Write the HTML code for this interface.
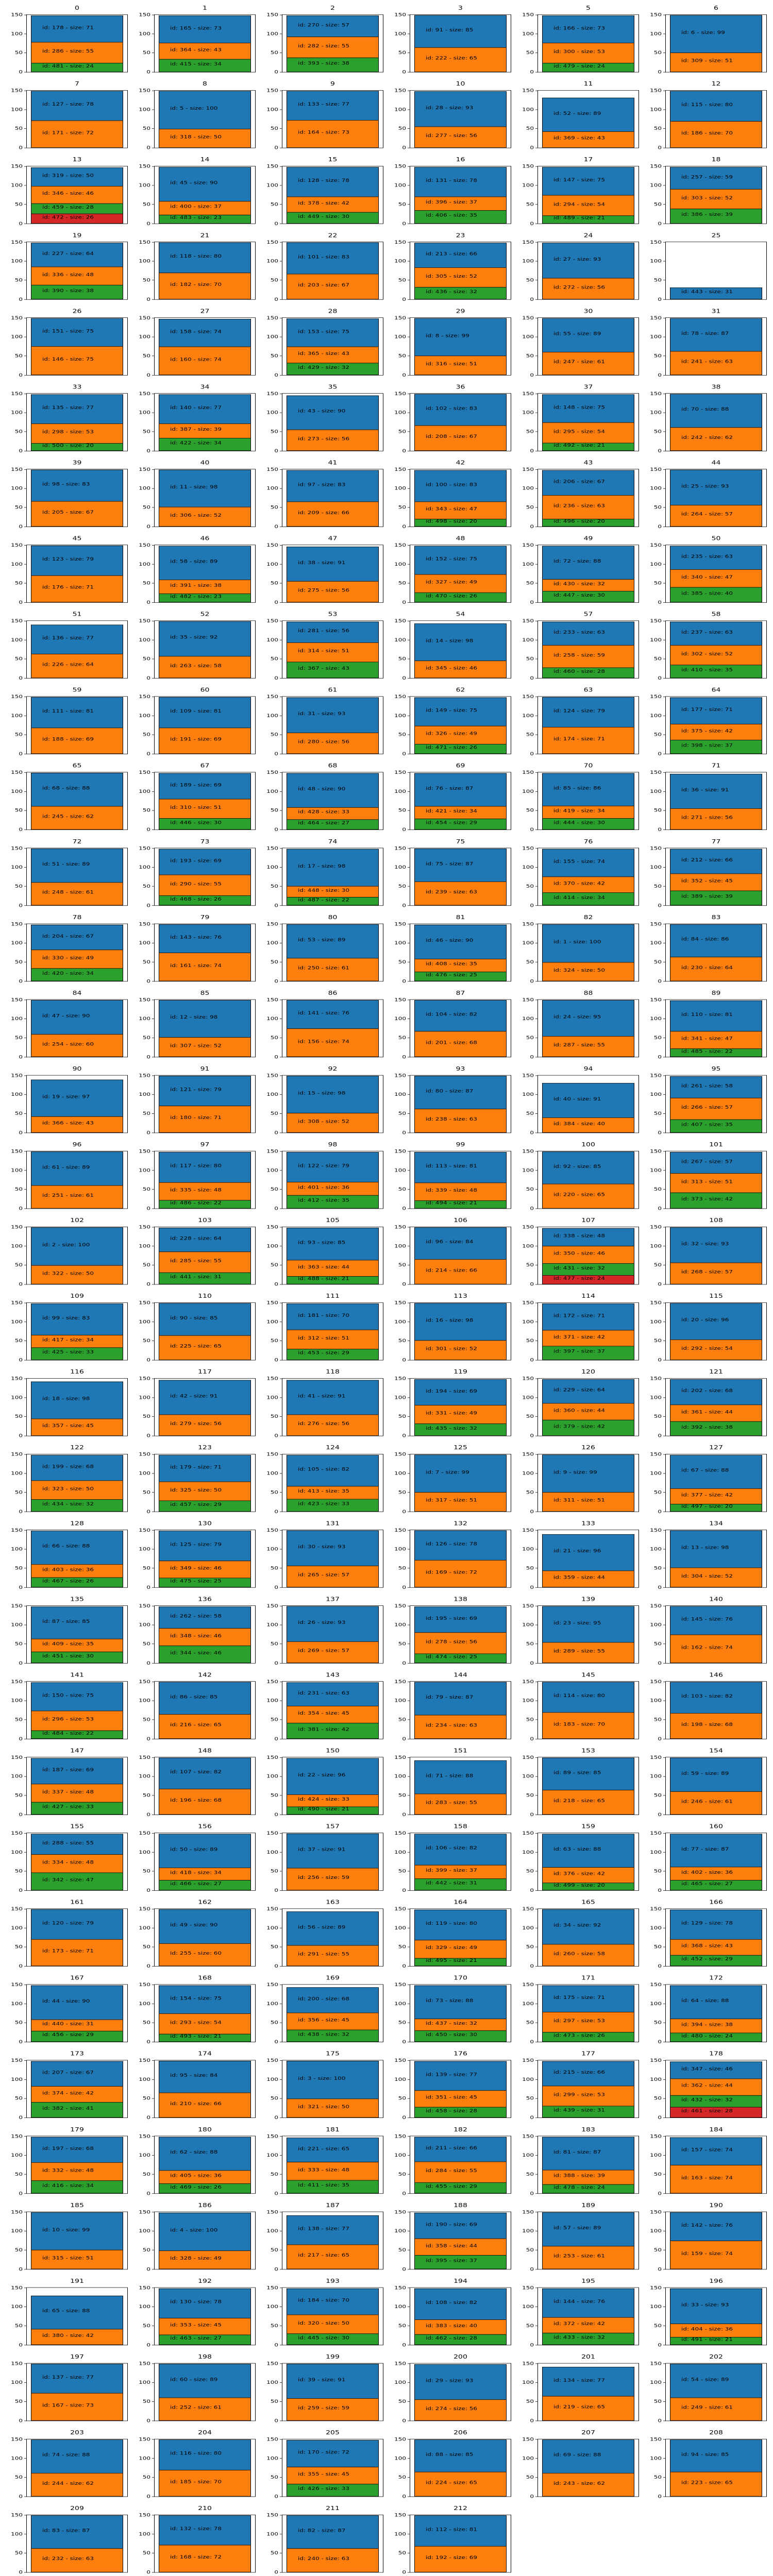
<!DOCTYPE html>
<html><head><meta charset="utf-8"><style>
html,body{margin:0;padding:0;width:100%;height:100%;overflow:hidden;background:#fff}
svg.root{display:block;width:100vw;height:100vh}
.g{display:grid;grid-template-columns:repeat(6,248px);grid-template-rows:repeat(34,200px);width:1500px;height:6800px;font-family:"DejaVu Sans","Liberation Sans",sans-serif;background:#fff}
.c{position:relative;width:248px;height:200px}
.c>b{position:absolute;left:51px;width:197px;top:14px;text-align:center;font-weight:normal;font-size:14px;line-height:16px;color:#000}
.a{position:absolute;left:51px;top:38px;width:197px;height:153px;border:1px solid #000;box-sizing:border-box}
.a i{position:absolute;right:calc(100% + 8px);font-style:normal;font-size:12px;line-height:14px;margin-top:-7px;color:#000}
.a i::after{content:"";position:absolute;left:calc(100% + 3px);top:7px;width:5px;height:1px;background:#000}
.a i:nth-child(1){top:0}.a i:nth-child(2){top:50px}.a i:nth-child(3){top:100px}.a i:nth-child(4){top:151px}
.s{position:absolute;left:8px;bottom:0;width:179px;height:151px;display:flex;flex-direction:column;justify-content:flex-end}
.s p{margin:0;position:relative;height:calc(var(--h) * 1.007px);border:1px solid #000;box-sizing:border-box;background:#1f77b4;flex:none}
.s p+p{margin-top:-1px}
.s p:nth-child(2){background:#ff7f0e}.s p:nth-child(3){background:#2ca02c}.s p:nth-child(4){background:#d62728}
.s p span{position:absolute;left:21px;top:calc(50% - 4px);transform:translateY(-50%);font-size:12px;white-space:nowrap;color:#000;line-height:14px}
</style></head><body><svg class="root" xmlns="http://www.w3.org/2000/svg" viewBox="0 0 1500 6800" preserveAspectRatio="none"><foreignObject x="0" y="0" width="1500" height="6800"><div xmlns="http://www.w3.org/1999/xhtml" class="g">
<div class="c"><b>0</b><div class="a"><i>150</i><i>100</i><i>50</i><i>0</i><div class="s"><p style="--h:71"><span>id: 178 - size: 71</span></p><p style="--h:55"><span>id: 286 - size: 55</span></p><p style="--h:24"><span>id: 481 - size: 24</span></p></div></div></div>
<div class="c"><b>1</b><div class="a"><i>150</i><i>100</i><i>50</i><i>0</i><div class="s"><p style="--h:73"><span>id: 165 - size: 73</span></p><p style="--h:43"><span>id: 364 - size: 43</span></p><p style="--h:34"><span>id: 415 - size: 34</span></p></div></div></div>
<div class="c"><b>2</b><div class="a"><i>150</i><i>100</i><i>50</i><i>0</i><div class="s"><p style="--h:57"><span>id: 270 - size: 57</span></p><p style="--h:55"><span>id: 282 - size: 55</span></p><p style="--h:38"><span>id: 393 - size: 38</span></p></div></div></div>
<div class="c"><b>3</b><div class="a"><i>150</i><i>100</i><i>50</i><i>0</i><div class="s"><p style="--h:85"><span>id: 91 - size: 85</span></p><p style="--h:65"><span>id: 222 - size: 65</span></p></div></div></div>
<div class="c"><b>5</b><div class="a"><i>150</i><i>100</i><i>50</i><i>0</i><div class="s"><p style="--h:73"><span>id: 166 - size: 73</span></p><p style="--h:53"><span>id: 300 - size: 53</span></p><p style="--h:24"><span>id: 479 - size: 24</span></p></div></div></div>
<div class="c"><b>6</b><div class="a"><i>150</i><i>100</i><i>50</i><i>0</i><div class="s"><p style="--h:99"><span>id: 6 - size: 99</span></p><p style="--h:51"><span>id: 309 - size: 51</span></p></div></div></div>
<div class="c"><b>7</b><div class="a"><i>150</i><i>100</i><i>50</i><i>0</i><div class="s"><p style="--h:78"><span>id: 127 - size: 78</span></p><p style="--h:72"><span>id: 171 - size: 72</span></p></div></div></div>
<div class="c"><b>8</b><div class="a"><i>150</i><i>100</i><i>50</i><i>0</i><div class="s"><p style="--h:100"><span>id: 5 - size: 100</span></p><p style="--h:50"><span>id: 318 - size: 50</span></p></div></div></div>
<div class="c"><b>9</b><div class="a"><i>150</i><i>100</i><i>50</i><i>0</i><div class="s"><p style="--h:77"><span>id: 133 - size: 77</span></p><p style="--h:73"><span>id: 164 - size: 73</span></p></div></div></div>
<div class="c"><b>10</b><div class="a"><i>150</i><i>100</i><i>50</i><i>0</i><div class="s"><p style="--h:93"><span>id: 28 - size: 93</span></p><p style="--h:56"><span>id: 277 - size: 56</span></p></div></div></div>
<div class="c"><b>11</b><div class="a"><i>150</i><i>100</i><i>50</i><i>0</i><div class="s"><p style="--h:89"><span>id: 52 - size: 89</span></p><p style="--h:43"><span>id: 369 - size: 43</span></p></div></div></div>
<div class="c"><b>12</b><div class="a"><i>150</i><i>100</i><i>50</i><i>0</i><div class="s"><p style="--h:80"><span>id: 115 - size: 80</span></p><p style="--h:70"><span>id: 186 - size: 70</span></p></div></div></div>
<div class="c"><b>13</b><div class="a"><i>150</i><i>100</i><i>50</i><i>0</i><div class="s"><p style="--h:50"><span>id: 319 - size: 50</span></p><p style="--h:46"><span>id: 346 - size: 46</span></p><p style="--h:28"><span>id: 459 - size: 28</span></p><p style="--h:26"><span>id: 472 - size: 26</span></p></div></div></div>
<div class="c"><b>14</b><div class="a"><i>150</i><i>100</i><i>50</i><i>0</i><div class="s"><p style="--h:90"><span>id: 45 - size: 90</span></p><p style="--h:37"><span>id: 400 - size: 37</span></p><p style="--h:23"><span>id: 483 - size: 23</span></p></div></div></div>
<div class="c"><b>15</b><div class="a"><i>150</i><i>100</i><i>50</i><i>0</i><div class="s"><p style="--h:78"><span>id: 128 - size: 78</span></p><p style="--h:42"><span>id: 378 - size: 42</span></p><p style="--h:30"><span>id: 449 - size: 30</span></p></div></div></div>
<div class="c"><b>16</b><div class="a"><i>150</i><i>100</i><i>50</i><i>0</i><div class="s"><p style="--h:78"><span>id: 131 - size: 78</span></p><p style="--h:37"><span>id: 396 - size: 37</span></p><p style="--h:35"><span>id: 406 - size: 35</span></p></div></div></div>
<div class="c"><b>17</b><div class="a"><i>150</i><i>100</i><i>50</i><i>0</i><div class="s"><p style="--h:75"><span>id: 147 - size: 75</span></p><p style="--h:54"><span>id: 294 - size: 54</span></p><p style="--h:21"><span>id: 489 - size: 21</span></p></div></div></div>
<div class="c"><b>18</b><div class="a"><i>150</i><i>100</i><i>50</i><i>0</i><div class="s"><p style="--h:59"><span>id: 257 - size: 59</span></p><p style="--h:52"><span>id: 303 - size: 52</span></p><p style="--h:39"><span>id: 386 - size: 39</span></p></div></div></div>
<div class="c"><b>19</b><div class="a"><i>150</i><i>100</i><i>50</i><i>0</i><div class="s"><p style="--h:64"><span>id: 227 - size: 64</span></p><p style="--h:48"><span>id: 336 - size: 48</span></p><p style="--h:38"><span>id: 390 - size: 38</span></p></div></div></div>
<div class="c"><b>21</b><div class="a"><i>150</i><i>100</i><i>50</i><i>0</i><div class="s"><p style="--h:80"><span>id: 118 - size: 80</span></p><p style="--h:70"><span>id: 182 - size: 70</span></p></div></div></div>
<div class="c"><b>22</b><div class="a"><i>150</i><i>100</i><i>50</i><i>0</i><div class="s"><p style="--h:83"><span>id: 101 - size: 83</span></p><p style="--h:67"><span>id: 203 - size: 67</span></p></div></div></div>
<div class="c"><b>23</b><div class="a"><i>150</i><i>100</i><i>50</i><i>0</i><div class="s"><p style="--h:66"><span>id: 213 - size: 66</span></p><p style="--h:52"><span>id: 305 - size: 52</span></p><p style="--h:32"><span>id: 436 - size: 32</span></p></div></div></div>
<div class="c"><b>24</b><div class="a"><i>150</i><i>100</i><i>50</i><i>0</i><div class="s"><p style="--h:93"><span>id: 27 - size: 93</span></p><p style="--h:56"><span>id: 272 - size: 56</span></p></div></div></div>
<div class="c"><b>25</b><div class="a"><i>150</i><i>100</i><i>50</i><i>0</i><div class="s"><p style="--h:31"><span>id: 443 - size: 31</span></p></div></div></div>
<div class="c"><b>26</b><div class="a"><i>150</i><i>100</i><i>50</i><i>0</i><div class="s"><p style="--h:75"><span>id: 151 - size: 75</span></p><p style="--h:75"><span>id: 146 - size: 75</span></p></div></div></div>
<div class="c"><b>27</b><div class="a"><i>150</i><i>100</i><i>50</i><i>0</i><div class="s"><p style="--h:74"><span>id: 158 - size: 74</span></p><p style="--h:74"><span>id: 160 - size: 74</span></p></div></div></div>
<div class="c"><b>28</b><div class="a"><i>150</i><i>100</i><i>50</i><i>0</i><div class="s"><p style="--h:75"><span>id: 153 - size: 75</span></p><p style="--h:43"><span>id: 365 - size: 43</span></p><p style="--h:32"><span>id: 429 - size: 32</span></p></div></div></div>
<div class="c"><b>29</b><div class="a"><i>150</i><i>100</i><i>50</i><i>0</i><div class="s"><p style="--h:99"><span>id: 8 - size: 99</span></p><p style="--h:51"><span>id: 316 - size: 51</span></p></div></div></div>
<div class="c"><b>30</b><div class="a"><i>150</i><i>100</i><i>50</i><i>0</i><div class="s"><p style="--h:89"><span>id: 55 - size: 89</span></p><p style="--h:61"><span>id: 247 - size: 61</span></p></div></div></div>
<div class="c"><b>31</b><div class="a"><i>150</i><i>100</i><i>50</i><i>0</i><div class="s"><p style="--h:87"><span>id: 78 - size: 87</span></p><p style="--h:63"><span>id: 241 - size: 63</span></p></div></div></div>
<div class="c"><b>33</b><div class="a"><i>150</i><i>100</i><i>50</i><i>0</i><div class="s"><p style="--h:77"><span>id: 135 - size: 77</span></p><p style="--h:53"><span>id: 298 - size: 53</span></p><p style="--h:20"><span>id: 500 - size: 20</span></p></div></div></div>
<div class="c"><b>34</b><div class="a"><i>150</i><i>100</i><i>50</i><i>0</i><div class="s"><p style="--h:77"><span>id: 140 - size: 77</span></p><p style="--h:39"><span>id: 387 - size: 39</span></p><p style="--h:34"><span>id: 422 - size: 34</span></p></div></div></div>
<div class="c"><b>35</b><div class="a"><i>150</i><i>100</i><i>50</i><i>0</i><div class="s"><p style="--h:90"><span>id: 43 - size: 90</span></p><p style="--h:56"><span>id: 273 - size: 56</span></p></div></div></div>
<div class="c"><b>36</b><div class="a"><i>150</i><i>100</i><i>50</i><i>0</i><div class="s"><p style="--h:83"><span>id: 102 - size: 83</span></p><p style="--h:67"><span>id: 208 - size: 67</span></p></div></div></div>
<div class="c"><b>37</b><div class="a"><i>150</i><i>100</i><i>50</i><i>0</i><div class="s"><p style="--h:75"><span>id: 148 - size: 75</span></p><p style="--h:54"><span>id: 295 - size: 54</span></p><p style="--h:21"><span>id: 492 - size: 21</span></p></div></div></div>
<div class="c"><b>38</b><div class="a"><i>150</i><i>100</i><i>50</i><i>0</i><div class="s"><p style="--h:88"><span>id: 70 - size: 88</span></p><p style="--h:62"><span>id: 242 - size: 62</span></p></div></div></div>
<div class="c"><b>39</b><div class="a"><i>150</i><i>100</i><i>50</i><i>0</i><div class="s"><p style="--h:83"><span>id: 98 - size: 83</span></p><p style="--h:67"><span>id: 205 - size: 67</span></p></div></div></div>
<div class="c"><b>40</b><div class="a"><i>150</i><i>100</i><i>50</i><i>0</i><div class="s"><p style="--h:98"><span>id: 11 - size: 98</span></p><p style="--h:52"><span>id: 306 - size: 52</span></p></div></div></div>
<div class="c"><b>41</b><div class="a"><i>150</i><i>100</i><i>50</i><i>0</i><div class="s"><p style="--h:83"><span>id: 97 - size: 83</span></p><p style="--h:66"><span>id: 209 - size: 66</span></p></div></div></div>
<div class="c"><b>42</b><div class="a"><i>150</i><i>100</i><i>50</i><i>0</i><div class="s"><p style="--h:83"><span>id: 100 - size: 83</span></p><p style="--h:47"><span>id: 343 - size: 47</span></p><p style="--h:20"><span>id: 498 - size: 20</span></p></div></div></div>
<div class="c"><b>43</b><div class="a"><i>150</i><i>100</i><i>50</i><i>0</i><div class="s"><p style="--h:67"><span>id: 206 - size: 67</span></p><p style="--h:63"><span>id: 236 - size: 63</span></p><p style="--h:20"><span>id: 496 - size: 20</span></p></div></div></div>
<div class="c"><b>44</b><div class="a"><i>150</i><i>100</i><i>50</i><i>0</i><div class="s"><p style="--h:93"><span>id: 25 - size: 93</span></p><p style="--h:57"><span>id: 264 - size: 57</span></p></div></div></div>
<div class="c"><b>45</b><div class="a"><i>150</i><i>100</i><i>50</i><i>0</i><div class="s"><p style="--h:79"><span>id: 123 - size: 79</span></p><p style="--h:71"><span>id: 176 - size: 71</span></p></div></div></div>
<div class="c"><b>46</b><div class="a"><i>150</i><i>100</i><i>50</i><i>0</i><div class="s"><p style="--h:89"><span>id: 58 - size: 89</span></p><p style="--h:38"><span>id: 391 - size: 38</span></p><p style="--h:23"><span>id: 482 - size: 23</span></p></div></div></div>
<div class="c"><b>47</b><div class="a"><i>150</i><i>100</i><i>50</i><i>0</i><div class="s"><p style="--h:91"><span>id: 38 - size: 91</span></p><p style="--h:56"><span>id: 275 - size: 56</span></p></div></div></div>
<div class="c"><b>48</b><div class="a"><i>150</i><i>100</i><i>50</i><i>0</i><div class="s"><p style="--h:75"><span>id: 152 - size: 75</span></p><p style="--h:49"><span>id: 327 - size: 49</span></p><p style="--h:26"><span>id: 470 - size: 26</span></p></div></div></div>
<div class="c"><b>49</b><div class="a"><i>150</i><i>100</i><i>50</i><i>0</i><div class="s"><p style="--h:88"><span>id: 72 - size: 88</span></p><p style="--h:32"><span>id: 430 - size: 32</span></p><p style="--h:30"><span>id: 447 - size: 30</span></p></div></div></div>
<div class="c"><b>50</b><div class="a"><i>150</i><i>100</i><i>50</i><i>0</i><div class="s"><p style="--h:63"><span>id: 235 - size: 63</span></p><p style="--h:47"><span>id: 340 - size: 47</span></p><p style="--h:40"><span>id: 385 - size: 40</span></p></div></div></div>
<div class="c"><b>51</b><div class="a"><i>150</i><i>100</i><i>50</i><i>0</i><div class="s"><p style="--h:77"><span>id: 136 - size: 77</span></p><p style="--h:64"><span>id: 226 - size: 64</span></p></div></div></div>
<div class="c"><b>52</b><div class="a"><i>150</i><i>100</i><i>50</i><i>0</i><div class="s"><p style="--h:92"><span>id: 35 - size: 92</span></p><p style="--h:58"><span>id: 263 - size: 58</span></p></div></div></div>
<div class="c"><b>53</b><div class="a"><i>150</i><i>100</i><i>50</i><i>0</i><div class="s"><p style="--h:56"><span>id: 281 - size: 56</span></p><p style="--h:51"><span>id: 314 - size: 51</span></p><p style="--h:43"><span>id: 367 - size: 43</span></p></div></div></div>
<div class="c"><b>54</b><div class="a"><i>150</i><i>100</i><i>50</i><i>0</i><div class="s"><p style="--h:98"><span>id: 14 - size: 98</span></p><p style="--h:46"><span>id: 345 - size: 46</span></p></div></div></div>
<div class="c"><b>57</b><div class="a"><i>150</i><i>100</i><i>50</i><i>0</i><div class="s"><p style="--h:63"><span>id: 233 - size: 63</span></p><p style="--h:59"><span>id: 258 - size: 59</span></p><p style="--h:28"><span>id: 460 - size: 28</span></p></div></div></div>
<div class="c"><b>58</b><div class="a"><i>150</i><i>100</i><i>50</i><i>0</i><div class="s"><p style="--h:63"><span>id: 237 - size: 63</span></p><p style="--h:52"><span>id: 302 - size: 52</span></p><p style="--h:35"><span>id: 410 - size: 35</span></p></div></div></div>
<div class="c"><b>59</b><div class="a"><i>150</i><i>100</i><i>50</i><i>0</i><div class="s"><p style="--h:81"><span>id: 111 - size: 81</span></p><p style="--h:69"><span>id: 188 - size: 69</span></p></div></div></div>
<div class="c"><b>60</b><div class="a"><i>150</i><i>100</i><i>50</i><i>0</i><div class="s"><p style="--h:81"><span>id: 109 - size: 81</span></p><p style="--h:69"><span>id: 191 - size: 69</span></p></div></div></div>
<div class="c"><b>61</b><div class="a"><i>150</i><i>100</i><i>50</i><i>0</i><div class="s"><p style="--h:93"><span>id: 31 - size: 93</span></p><p style="--h:56"><span>id: 280 - size: 56</span></p></div></div></div>
<div class="c"><b>62</b><div class="a"><i>150</i><i>100</i><i>50</i><i>0</i><div class="s"><p style="--h:75"><span>id: 149 - size: 75</span></p><p style="--h:49"><span>id: 326 - size: 49</span></p><p style="--h:26"><span>id: 471 - size: 26</span></p></div></div></div>
<div class="c"><b>63</b><div class="a"><i>150</i><i>100</i><i>50</i><i>0</i><div class="s"><p style="--h:79"><span>id: 124 - size: 79</span></p><p style="--h:71"><span>id: 174 - size: 71</span></p></div></div></div>
<div class="c"><b>64</b><div class="a"><i>150</i><i>100</i><i>50</i><i>0</i><div class="s"><p style="--h:71"><span>id: 177 - size: 71</span></p><p style="--h:42"><span>id: 375 - size: 42</span></p><p style="--h:37"><span>id: 398 - size: 37</span></p></div></div></div>
<div class="c"><b>65</b><div class="a"><i>150</i><i>100</i><i>50</i><i>0</i><div class="s"><p style="--h:88"><span>id: 68 - size: 88</span></p><p style="--h:62"><span>id: 245 - size: 62</span></p></div></div></div>
<div class="c"><b>67</b><div class="a"><i>150</i><i>100</i><i>50</i><i>0</i><div class="s"><p style="--h:69"><span>id: 189 - size: 69</span></p><p style="--h:51"><span>id: 310 - size: 51</span></p><p style="--h:30"><span>id: 446 - size: 30</span></p></div></div></div>
<div class="c"><b>68</b><div class="a"><i>150</i><i>100</i><i>50</i><i>0</i><div class="s"><p style="--h:90"><span>id: 48 - size: 90</span></p><p style="--h:33"><span>id: 428 - size: 33</span></p><p style="--h:27"><span>id: 464 - size: 27</span></p></div></div></div>
<div class="c"><b>69</b><div class="a"><i>150</i><i>100</i><i>50</i><i>0</i><div class="s"><p style="--h:87"><span>id: 76 - size: 87</span></p><p style="--h:34"><span>id: 421 - size: 34</span></p><p style="--h:29"><span>id: 454 - size: 29</span></p></div></div></div>
<div class="c"><b>70</b><div class="a"><i>150</i><i>100</i><i>50</i><i>0</i><div class="s"><p style="--h:86"><span>id: 85 - size: 86</span></p><p style="--h:34"><span>id: 419 - size: 34</span></p><p style="--h:30"><span>id: 444 - size: 30</span></p></div></div></div>
<div class="c"><b>71</b><div class="a"><i>150</i><i>100</i><i>50</i><i>0</i><div class="s"><p style="--h:91"><span>id: 36 - size: 91</span></p><p style="--h:56"><span>id: 271 - size: 56</span></p></div></div></div>
<div class="c"><b>72</b><div class="a"><i>150</i><i>100</i><i>50</i><i>0</i><div class="s"><p style="--h:89"><span>id: 51 - size: 89</span></p><p style="--h:61"><span>id: 248 - size: 61</span></p></div></div></div>
<div class="c"><b>73</b><div class="a"><i>150</i><i>100</i><i>50</i><i>0</i><div class="s"><p style="--h:69"><span>id: 193 - size: 69</span></p><p style="--h:55"><span>id: 290 - size: 55</span></p><p style="--h:26"><span>id: 468 - size: 26</span></p></div></div></div>
<div class="c"><b>74</b><div class="a"><i>150</i><i>100</i><i>50</i><i>0</i><div class="s"><p style="--h:98"><span>id: 17 - size: 98</span></p><p style="--h:30"><span>id: 448 - size: 30</span></p><p style="--h:22"><span>id: 487 - size: 22</span></p></div></div></div>
<div class="c"><b>75</b><div class="a"><i>150</i><i>100</i><i>50</i><i>0</i><div class="s"><p style="--h:87"><span>id: 75 - size: 87</span></p><p style="--h:63"><span>id: 239 - size: 63</span></p></div></div></div>
<div class="c"><b>76</b><div class="a"><i>150</i><i>100</i><i>50</i><i>0</i><div class="s"><p style="--h:74"><span>id: 155 - size: 74</span></p><p style="--h:42"><span>id: 370 - size: 42</span></p><p style="--h:34"><span>id: 414 - size: 34</span></p></div></div></div>
<div class="c"><b>77</b><div class="a"><i>150</i><i>100</i><i>50</i><i>0</i><div class="s"><p style="--h:66"><span>id: 212 - size: 66</span></p><p style="--h:45"><span>id: 352 - size: 45</span></p><p style="--h:39"><span>id: 389 - size: 39</span></p></div></div></div>
<div class="c"><b>78</b><div class="a"><i>150</i><i>100</i><i>50</i><i>0</i><div class="s"><p style="--h:67"><span>id: 204 - size: 67</span></p><p style="--h:49"><span>id: 330 - size: 49</span></p><p style="--h:34"><span>id: 420 - size: 34</span></p></div></div></div>
<div class="c"><b>79</b><div class="a"><i>150</i><i>100</i><i>50</i><i>0</i><div class="s"><p style="--h:76"><span>id: 143 - size: 76</span></p><p style="--h:74"><span>id: 161 - size: 74</span></p></div></div></div>
<div class="c"><b>80</b><div class="a"><i>150</i><i>100</i><i>50</i><i>0</i><div class="s"><p style="--h:89"><span>id: 53 - size: 89</span></p><p style="--h:61"><span>id: 250 - size: 61</span></p></div></div></div>
<div class="c"><b>81</b><div class="a"><i>150</i><i>100</i><i>50</i><i>0</i><div class="s"><p style="--h:90"><span>id: 46 - size: 90</span></p><p style="--h:35"><span>id: 408 - size: 35</span></p><p style="--h:25"><span>id: 476 - size: 25</span></p></div></div></div>
<div class="c"><b>82</b><div class="a"><i>150</i><i>100</i><i>50</i><i>0</i><div class="s"><p style="--h:100"><span>id: 1 - size: 100</span></p><p style="--h:50"><span>id: 324 - size: 50</span></p></div></div></div>
<div class="c"><b>83</b><div class="a"><i>150</i><i>100</i><i>50</i><i>0</i><div class="s"><p style="--h:86"><span>id: 84 - size: 86</span></p><p style="--h:64"><span>id: 230 - size: 64</span></p></div></div></div>
<div class="c"><b>84</b><div class="a"><i>150</i><i>100</i><i>50</i><i>0</i><div class="s"><p style="--h:90"><span>id: 47 - size: 90</span></p><p style="--h:60"><span>id: 254 - size: 60</span></p></div></div></div>
<div class="c"><b>85</b><div class="a"><i>150</i><i>100</i><i>50</i><i>0</i><div class="s"><p style="--h:98"><span>id: 12 - size: 98</span></p><p style="--h:52"><span>id: 307 - size: 52</span></p></div></div></div>
<div class="c"><b>86</b><div class="a"><i>150</i><i>100</i><i>50</i><i>0</i><div class="s"><p style="--h:76"><span>id: 141 - size: 76</span></p><p style="--h:74"><span>id: 156 - size: 74</span></p></div></div></div>
<div class="c"><b>87</b><div class="a"><i>150</i><i>100</i><i>50</i><i>0</i><div class="s"><p style="--h:82"><span>id: 104 - size: 82</span></p><p style="--h:68"><span>id: 201 - size: 68</span></p></div></div></div>
<div class="c"><b>88</b><div class="a"><i>150</i><i>100</i><i>50</i><i>0</i><div class="s"><p style="--h:95"><span>id: 24 - size: 95</span></p><p style="--h:55"><span>id: 287 - size: 55</span></p></div></div></div>
<div class="c"><b>89</b><div class="a"><i>150</i><i>100</i><i>50</i><i>0</i><div class="s"><p style="--h:81"><span>id: 110 - size: 81</span></p><p style="--h:47"><span>id: 341 - size: 47</span></p><p style="--h:22"><span>id: 485 - size: 22</span></p></div></div></div>
<div class="c"><b>90</b><div class="a"><i>150</i><i>100</i><i>50</i><i>0</i><div class="s"><p style="--h:97"><span>id: 19 - size: 97</span></p><p style="--h:43"><span>id: 366 - size: 43</span></p></div></div></div>
<div class="c"><b>91</b><div class="a"><i>150</i><i>100</i><i>50</i><i>0</i><div class="s"><p style="--h:79"><span>id: 121 - size: 79</span></p><p style="--h:71"><span>id: 180 - size: 71</span></p></div></div></div>
<div class="c"><b>92</b><div class="a"><i>150</i><i>100</i><i>50</i><i>0</i><div class="s"><p style="--h:98"><span>id: 15 - size: 98</span></p><p style="--h:52"><span>id: 308 - size: 52</span></p></div></div></div>
<div class="c"><b>93</b><div class="a"><i>150</i><i>100</i><i>50</i><i>0</i><div class="s"><p style="--h:87"><span>id: 80 - size: 87</span></p><p style="--h:63"><span>id: 238 - size: 63</span></p></div></div></div>
<div class="c"><b>94</b><div class="a"><i>150</i><i>100</i><i>50</i><i>0</i><div class="s"><p style="--h:91"><span>id: 40 - size: 91</span></p><p style="--h:40"><span>id: 384 - size: 40</span></p></div></div></div>
<div class="c"><b>95</b><div class="a"><i>150</i><i>100</i><i>50</i><i>0</i><div class="s"><p style="--h:58"><span>id: 261 - size: 58</span></p><p style="--h:57"><span>id: 266 - size: 57</span></p><p style="--h:35"><span>id: 407 - size: 35</span></p></div></div></div>
<div class="c"><b>96</b><div class="a"><i>150</i><i>100</i><i>50</i><i>0</i><div class="s"><p style="--h:89"><span>id: 61 - size: 89</span></p><p style="--h:61"><span>id: 251 - size: 61</span></p></div></div></div>
<div class="c"><b>97</b><div class="a"><i>150</i><i>100</i><i>50</i><i>0</i><div class="s"><p style="--h:80"><span>id: 117 - size: 80</span></p><p style="--h:48"><span>id: 335 - size: 48</span></p><p style="--h:22"><span>id: 486 - size: 22</span></p></div></div></div>
<div class="c"><b>98</b><div class="a"><i>150</i><i>100</i><i>50</i><i>0</i><div class="s"><p style="--h:79"><span>id: 122 - size: 79</span></p><p style="--h:36"><span>id: 401 - size: 36</span></p><p style="--h:35"><span>id: 412 - size: 35</span></p></div></div></div>
<div class="c"><b>99</b><div class="a"><i>150</i><i>100</i><i>50</i><i>0</i><div class="s"><p style="--h:81"><span>id: 113 - size: 81</span></p><p style="--h:48"><span>id: 339 - size: 48</span></p><p style="--h:21"><span>id: 494 - size: 21</span></p></div></div></div>
<div class="c"><b>100</b><div class="a"><i>150</i><i>100</i><i>50</i><i>0</i><div class="s"><p style="--h:85"><span>id: 92 - size: 85</span></p><p style="--h:65"><span>id: 220 - size: 65</span></p></div></div></div>
<div class="c"><b>101</b><div class="a"><i>150</i><i>100</i><i>50</i><i>0</i><div class="s"><p style="--h:57"><span>id: 267 - size: 57</span></p><p style="--h:51"><span>id: 313 - size: 51</span></p><p style="--h:42"><span>id: 373 - size: 42</span></p></div></div></div>
<div class="c"><b>102</b><div class="a"><i>150</i><i>100</i><i>50</i><i>0</i><div class="s"><p style="--h:100"><span>id: 2 - size: 100</span></p><p style="--h:50"><span>id: 322 - size: 50</span></p></div></div></div>
<div class="c"><b>103</b><div class="a"><i>150</i><i>100</i><i>50</i><i>0</i><div class="s"><p style="--h:64"><span>id: 228 - size: 64</span></p><p style="--h:55"><span>id: 285 - size: 55</span></p><p style="--h:31"><span>id: 441 - size: 31</span></p></div></div></div>
<div class="c"><b>105</b><div class="a"><i>150</i><i>100</i><i>50</i><i>0</i><div class="s"><p style="--h:85"><span>id: 93 - size: 85</span></p><p style="--h:44"><span>id: 363 - size: 44</span></p><p style="--h:21"><span>id: 488 - size: 21</span></p></div></div></div>
<div class="c"><b>106</b><div class="a"><i>150</i><i>100</i><i>50</i><i>0</i><div class="s"><p style="--h:84"><span>id: 96 - size: 84</span></p><p style="--h:66"><span>id: 214 - size: 66</span></p></div></div></div>
<div class="c"><b>107</b><div class="a"><i>150</i><i>100</i><i>50</i><i>0</i><div class="s"><p style="--h:48"><span>id: 338 - size: 48</span></p><p style="--h:46"><span>id: 350 - size: 46</span></p><p style="--h:32"><span>id: 431 - size: 32</span></p><p style="--h:24"><span>id: 477 - size: 24</span></p></div></div></div>
<div class="c"><b>108</b><div class="a"><i>150</i><i>100</i><i>50</i><i>0</i><div class="s"><p style="--h:93"><span>id: 32 - size: 93</span></p><p style="--h:57"><span>id: 268 - size: 57</span></p></div></div></div>
<div class="c"><b>109</b><div class="a"><i>150</i><i>100</i><i>50</i><i>0</i><div class="s"><p style="--h:83"><span>id: 99 - size: 83</span></p><p style="--h:34"><span>id: 417 - size: 34</span></p><p style="--h:33"><span>id: 425 - size: 33</span></p></div></div></div>
<div class="c"><b>110</b><div class="a"><i>150</i><i>100</i><i>50</i><i>0</i><div class="s"><p style="--h:85"><span>id: 90 - size: 85</span></p><p style="--h:65"><span>id: 225 - size: 65</span></p></div></div></div>
<div class="c"><b>111</b><div class="a"><i>150</i><i>100</i><i>50</i><i>0</i><div class="s"><p style="--h:70"><span>id: 181 - size: 70</span></p><p style="--h:51"><span>id: 312 - size: 51</span></p><p style="--h:29"><span>id: 453 - size: 29</span></p></div></div></div>
<div class="c"><b>113</b><div class="a"><i>150</i><i>100</i><i>50</i><i>0</i><div class="s"><p style="--h:98"><span>id: 16 - size: 98</span></p><p style="--h:52"><span>id: 301 - size: 52</span></p></div></div></div>
<div class="c"><b>114</b><div class="a"><i>150</i><i>100</i><i>50</i><i>0</i><div class="s"><p style="--h:71"><span>id: 172 - size: 71</span></p><p style="--h:42"><span>id: 371 - size: 42</span></p><p style="--h:37"><span>id: 397 - size: 37</span></p></div></div></div>
<div class="c"><b>115</b><div class="a"><i>150</i><i>100</i><i>50</i><i>0</i><div class="s"><p style="--h:96"><span>id: 20 - size: 96</span></p><p style="--h:54"><span>id: 292 - size: 54</span></p></div></div></div>
<div class="c"><b>116</b><div class="a"><i>150</i><i>100</i><i>50</i><i>0</i><div class="s"><p style="--h:98"><span>id: 18 - size: 98</span></p><p style="--h:45"><span>id: 357 - size: 45</span></p></div></div></div>
<div class="c"><b>117</b><div class="a"><i>150</i><i>100</i><i>50</i><i>0</i><div class="s"><p style="--h:91"><span>id: 42 - size: 91</span></p><p style="--h:56"><span>id: 279 - size: 56</span></p></div></div></div>
<div class="c"><b>118</b><div class="a"><i>150</i><i>100</i><i>50</i><i>0</i><div class="s"><p style="--h:91"><span>id: 41 - size: 91</span></p><p style="--h:56"><span>id: 276 - size: 56</span></p></div></div></div>
<div class="c"><b>119</b><div class="a"><i>150</i><i>100</i><i>50</i><i>0</i><div class="s"><p style="--h:69"><span>id: 194 - size: 69</span></p><p style="--h:49"><span>id: 331 - size: 49</span></p><p style="--h:32"><span>id: 435 - size: 32</span></p></div></div></div>
<div class="c"><b>120</b><div class="a"><i>150</i><i>100</i><i>50</i><i>0</i><div class="s"><p style="--h:64"><span>id: 229 - size: 64</span></p><p style="--h:44"><span>id: 360 - size: 44</span></p><p style="--h:42"><span>id: 379 - size: 42</span></p></div></div></div>
<div class="c"><b>121</b><div class="a"><i>150</i><i>100</i><i>50</i><i>0</i><div class="s"><p style="--h:68"><span>id: 202 - size: 68</span></p><p style="--h:44"><span>id: 361 - size: 44</span></p><p style="--h:38"><span>id: 392 - size: 38</span></p></div></div></div>
<div class="c"><b>122</b><div class="a"><i>150</i><i>100</i><i>50</i><i>0</i><div class="s"><p style="--h:68"><span>id: 199 - size: 68</span></p><p style="--h:50"><span>id: 323 - size: 50</span></p><p style="--h:32"><span>id: 434 - size: 32</span></p></div></div></div>
<div class="c"><b>123</b><div class="a"><i>150</i><i>100</i><i>50</i><i>0</i><div class="s"><p style="--h:71"><span>id: 179 - size: 71</span></p><p style="--h:50"><span>id: 325 - size: 50</span></p><p style="--h:29"><span>id: 457 - size: 29</span></p></div></div></div>
<div class="c"><b>124</b><div class="a"><i>150</i><i>100</i><i>50</i><i>0</i><div class="s"><p style="--h:82"><span>id: 105 - size: 82</span></p><p style="--h:35"><span>id: 413 - size: 35</span></p><p style="--h:33"><span>id: 423 - size: 33</span></p></div></div></div>
<div class="c"><b>125</b><div class="a"><i>150</i><i>100</i><i>50</i><i>0</i><div class="s"><p style="--h:99"><span>id: 7 - size: 99</span></p><p style="--h:51"><span>id: 317 - size: 51</span></p></div></div></div>
<div class="c"><b>126</b><div class="a"><i>150</i><i>100</i><i>50</i><i>0</i><div class="s"><p style="--h:99"><span>id: 9 - size: 99</span></p><p style="--h:51"><span>id: 311 - size: 51</span></p></div></div></div>
<div class="c"><b>127</b><div class="a"><i>150</i><i>100</i><i>50</i><i>0</i><div class="s"><p style="--h:88"><span>id: 67 - size: 88</span></p><p style="--h:42"><span>id: 377 - size: 42</span></p><p style="--h:20"><span>id: 497 - size: 20</span></p></div></div></div>
<div class="c"><b>128</b><div class="a"><i>150</i><i>100</i><i>50</i><i>0</i><div class="s"><p style="--h:88"><span>id: 66 - size: 88</span></p><p style="--h:36"><span>id: 403 - size: 36</span></p><p style="--h:26"><span>id: 467 - size: 26</span></p></div></div></div>
<div class="c"><b>130</b><div class="a"><i>150</i><i>100</i><i>50</i><i>0</i><div class="s"><p style="--h:79"><span>id: 125 - size: 79</span></p><p style="--h:46"><span>id: 349 - size: 46</span></p><p style="--h:25"><span>id: 475 - size: 25</span></p></div></div></div>
<div class="c"><b>131</b><div class="a"><i>150</i><i>100</i><i>50</i><i>0</i><div class="s"><p style="--h:93"><span>id: 30 - size: 93</span></p><p style="--h:57"><span>id: 265 - size: 57</span></p></div></div></div>
<div class="c"><b>132</b><div class="a"><i>150</i><i>100</i><i>50</i><i>0</i><div class="s"><p style="--h:78"><span>id: 126 - size: 78</span></p><p style="--h:72"><span>id: 169 - size: 72</span></p></div></div></div>
<div class="c"><b>133</b><div class="a"><i>150</i><i>100</i><i>50</i><i>0</i><div class="s"><p style="--h:96"><span>id: 21 - size: 96</span></p><p style="--h:44"><span>id: 359 - size: 44</span></p></div></div></div>
<div class="c"><b>134</b><div class="a"><i>150</i><i>100</i><i>50</i><i>0</i><div class="s"><p style="--h:98"><span>id: 13 - size: 98</span></p><p style="--h:52"><span>id: 304 - size: 52</span></p></div></div></div>
<div class="c"><b>135</b><div class="a"><i>150</i><i>100</i><i>50</i><i>0</i><div class="s"><p style="--h:85"><span>id: 87 - size: 85</span></p><p style="--h:35"><span>id: 409 - size: 35</span></p><p style="--h:30"><span>id: 451 - size: 30</span></p></div></div></div>
<div class="c"><b>136</b><div class="a"><i>150</i><i>100</i><i>50</i><i>0</i><div class="s"><p style="--h:58"><span>id: 262 - size: 58</span></p><p style="--h:46"><span>id: 348 - size: 46</span></p><p style="--h:46"><span>id: 344 - size: 46</span></p></div></div></div>
<div class="c"><b>137</b><div class="a"><i>150</i><i>100</i><i>50</i><i>0</i><div class="s"><p style="--h:93"><span>id: 26 - size: 93</span></p><p style="--h:57"><span>id: 269 - size: 57</span></p></div></div></div>
<div class="c"><b>138</b><div class="a"><i>150</i><i>100</i><i>50</i><i>0</i><div class="s"><p style="--h:69"><span>id: 195 - size: 69</span></p><p style="--h:56"><span>id: 278 - size: 56</span></p><p style="--h:25"><span>id: 474 - size: 25</span></p></div></div></div>
<div class="c"><b>139</b><div class="a"><i>150</i><i>100</i><i>50</i><i>0</i><div class="s"><p style="--h:95"><span>id: 23 - size: 95</span></p><p style="--h:55"><span>id: 289 - size: 55</span></p></div></div></div>
<div class="c"><b>140</b><div class="a"><i>150</i><i>100</i><i>50</i><i>0</i><div class="s"><p style="--h:76"><span>id: 145 - size: 76</span></p><p style="--h:74"><span>id: 162 - size: 74</span></p></div></div></div>
<div class="c"><b>141</b><div class="a"><i>150</i><i>100</i><i>50</i><i>0</i><div class="s"><p style="--h:75"><span>id: 150 - size: 75</span></p><p style="--h:53"><span>id: 296 - size: 53</span></p><p style="--h:22"><span>id: 484 - size: 22</span></p></div></div></div>
<div class="c"><b>142</b><div class="a"><i>150</i><i>100</i><i>50</i><i>0</i><div class="s"><p style="--h:85"><span>id: 86 - size: 85</span></p><p style="--h:65"><span>id: 216 - size: 65</span></p></div></div></div>
<div class="c"><b>143</b><div class="a"><i>150</i><i>100</i><i>50</i><i>0</i><div class="s"><p style="--h:63"><span>id: 231 - size: 63</span></p><p style="--h:45"><span>id: 354 - size: 45</span></p><p style="--h:42"><span>id: 381 - size: 42</span></p></div></div></div>
<div class="c"><b>144</b><div class="a"><i>150</i><i>100</i><i>50</i><i>0</i><div class="s"><p style="--h:87"><span>id: 79 - size: 87</span></p><p style="--h:63"><span>id: 234 - size: 63</span></p></div></div></div>
<div class="c"><b>145</b><div class="a"><i>150</i><i>100</i><i>50</i><i>0</i><div class="s"><p style="--h:80"><span>id: 114 - size: 80</span></p><p style="--h:70"><span>id: 183 - size: 70</span></p></div></div></div>
<div class="c"><b>146</b><div class="a"><i>150</i><i>100</i><i>50</i><i>0</i><div class="s"><p style="--h:82"><span>id: 103 - size: 82</span></p><p style="--h:68"><span>id: 198 - size: 68</span></p></div></div></div>
<div class="c"><b>147</b><div class="a"><i>150</i><i>100</i><i>50</i><i>0</i><div class="s"><p style="--h:69"><span>id: 187 - size: 69</span></p><p style="--h:48"><span>id: 337 - size: 48</span></p><p style="--h:33"><span>id: 427 - size: 33</span></p></div></div></div>
<div class="c"><b>148</b><div class="a"><i>150</i><i>100</i><i>50</i><i>0</i><div class="s"><p style="--h:82"><span>id: 107 - size: 82</span></p><p style="--h:68"><span>id: 196 - size: 68</span></p></div></div></div>
<div class="c"><b>150</b><div class="a"><i>150</i><i>100</i><i>50</i><i>0</i><div class="s"><p style="--h:96"><span>id: 22 - size: 96</span></p><p style="--h:33"><span>id: 424 - size: 33</span></p><p style="--h:21"><span>id: 490 - size: 21</span></p></div></div></div>
<div class="c"><b>151</b><div class="a"><i>150</i><i>100</i><i>50</i><i>0</i><div class="s"><p style="--h:88"><span>id: 71 - size: 88</span></p><p style="--h:55"><span>id: 283 - size: 55</span></p></div></div></div>
<div class="c"><b>153</b><div class="a"><i>150</i><i>100</i><i>50</i><i>0</i><div class="s"><p style="--h:85"><span>id: 89 - size: 85</span></p><p style="--h:65"><span>id: 218 - size: 65</span></p></div></div></div>
<div class="c"><b>154</b><div class="a"><i>150</i><i>100</i><i>50</i><i>0</i><div class="s"><p style="--h:89"><span>id: 59 - size: 89</span></p><p style="--h:61"><span>id: 246 - size: 61</span></p></div></div></div>
<div class="c"><b>155</b><div class="a"><i>150</i><i>100</i><i>50</i><i>0</i><div class="s"><p style="--h:55"><span>id: 288 - size: 55</span></p><p style="--h:48"><span>id: 334 - size: 48</span></p><p style="--h:47"><span>id: 342 - size: 47</span></p></div></div></div>
<div class="c"><b>156</b><div class="a"><i>150</i><i>100</i><i>50</i><i>0</i><div class="s"><p style="--h:89"><span>id: 50 - size: 89</span></p><p style="--h:34"><span>id: 418 - size: 34</span></p><p style="--h:27"><span>id: 466 - size: 27</span></p></div></div></div>
<div class="c"><b>157</b><div class="a"><i>150</i><i>100</i><i>50</i><i>0</i><div class="s"><p style="--h:91"><span>id: 37 - size: 91</span></p><p style="--h:59"><span>id: 256 - size: 59</span></p></div></div></div>
<div class="c"><b>158</b><div class="a"><i>150</i><i>100</i><i>50</i><i>0</i><div class="s"><p style="--h:82"><span>id: 106 - size: 82</span></p><p style="--h:37"><span>id: 399 - size: 37</span></p><p style="--h:31"><span>id: 442 - size: 31</span></p></div></div></div>
<div class="c"><b>159</b><div class="a"><i>150</i><i>100</i><i>50</i><i>0</i><div class="s"><p style="--h:88"><span>id: 63 - size: 88</span></p><p style="--h:42"><span>id: 376 - size: 42</span></p><p style="--h:20"><span>id: 499 - size: 20</span></p></div></div></div>
<div class="c"><b>160</b><div class="a"><i>150</i><i>100</i><i>50</i><i>0</i><div class="s"><p style="--h:87"><span>id: 77 - size: 87</span></p><p style="--h:36"><span>id: 402 - size: 36</span></p><p style="--h:27"><span>id: 465 - size: 27</span></p></div></div></div>
<div class="c"><b>161</b><div class="a"><i>150</i><i>100</i><i>50</i><i>0</i><div class="s"><p style="--h:79"><span>id: 120 - size: 79</span></p><p style="--h:71"><span>id: 173 - size: 71</span></p></div></div></div>
<div class="c"><b>162</b><div class="a"><i>150</i><i>100</i><i>50</i><i>0</i><div class="s"><p style="--h:90"><span>id: 49 - size: 90</span></p><p style="--h:60"><span>id: 255 - size: 60</span></p></div></div></div>
<div class="c"><b>163</b><div class="a"><i>150</i><i>100</i><i>50</i><i>0</i><div class="s"><p style="--h:89"><span>id: 56 - size: 89</span></p><p style="--h:55"><span>id: 291 - size: 55</span></p></div></div></div>
<div class="c"><b>164</b><div class="a"><i>150</i><i>100</i><i>50</i><i>0</i><div class="s"><p style="--h:80"><span>id: 119 - size: 80</span></p><p style="--h:49"><span>id: 329 - size: 49</span></p><p style="--h:21"><span>id: 495 - size: 21</span></p></div></div></div>
<div class="c"><b>165</b><div class="a"><i>150</i><i>100</i><i>50</i><i>0</i><div class="s"><p style="--h:92"><span>id: 34 - size: 92</span></p><p style="--h:58"><span>id: 260 - size: 58</span></p></div></div></div>
<div class="c"><b>166</b><div class="a"><i>150</i><i>100</i><i>50</i><i>0</i><div class="s"><p style="--h:78"><span>id: 129 - size: 78</span></p><p style="--h:43"><span>id: 368 - size: 43</span></p><p style="--h:29"><span>id: 452 - size: 29</span></p></div></div></div>
<div class="c"><b>167</b><div class="a"><i>150</i><i>100</i><i>50</i><i>0</i><div class="s"><p style="--h:90"><span>id: 44 - size: 90</span></p><p style="--h:31"><span>id: 440 - size: 31</span></p><p style="--h:29"><span>id: 456 - size: 29</span></p></div></div></div>
<div class="c"><b>168</b><div class="a"><i>150</i><i>100</i><i>50</i><i>0</i><div class="s"><p style="--h:75"><span>id: 154 - size: 75</span></p><p style="--h:54"><span>id: 293 - size: 54</span></p><p style="--h:21"><span>id: 493 - size: 21</span></p></div></div></div>
<div class="c"><b>169</b><div class="a"><i>150</i><i>100</i><i>50</i><i>0</i><div class="s"><p style="--h:68"><span>id: 200 - size: 68</span></p><p style="--h:45"><span>id: 356 - size: 45</span></p><p style="--h:32"><span>id: 438 - size: 32</span></p></div></div></div>
<div class="c"><b>170</b><div class="a"><i>150</i><i>100</i><i>50</i><i>0</i><div class="s"><p style="--h:88"><span>id: 73 - size: 88</span></p><p style="--h:32"><span>id: 437 - size: 32</span></p><p style="--h:30"><span>id: 450 - size: 30</span></p></div></div></div>
<div class="c"><b>171</b><div class="a"><i>150</i><i>100</i><i>50</i><i>0</i><div class="s"><p style="--h:71"><span>id: 175 - size: 71</span></p><p style="--h:53"><span>id: 297 - size: 53</span></p><p style="--h:26"><span>id: 473 - size: 26</span></p></div></div></div>
<div class="c"><b>172</b><div class="a"><i>150</i><i>100</i><i>50</i><i>0</i><div class="s"><p style="--h:88"><span>id: 64 - size: 88</span></p><p style="--h:38"><span>id: 394 - size: 38</span></p><p style="--h:24"><span>id: 480 - size: 24</span></p></div></div></div>
<div class="c"><b>173</b><div class="a"><i>150</i><i>100</i><i>50</i><i>0</i><div class="s"><p style="--h:67"><span>id: 207 - size: 67</span></p><p style="--h:42"><span>id: 374 - size: 42</span></p><p style="--h:41"><span>id: 382 - size: 41</span></p></div></div></div>
<div class="c"><b>174</b><div class="a"><i>150</i><i>100</i><i>50</i><i>0</i><div class="s"><p style="--h:84"><span>id: 95 - size: 84</span></p><p style="--h:66"><span>id: 210 - size: 66</span></p></div></div></div>
<div class="c"><b>175</b><div class="a"><i>150</i><i>100</i><i>50</i><i>0</i><div class="s"><p style="--h:100"><span>id: 3 - size: 100</span></p><p style="--h:50"><span>id: 321 - size: 50</span></p></div></div></div>
<div class="c"><b>176</b><div class="a"><i>150</i><i>100</i><i>50</i><i>0</i><div class="s"><p style="--h:77"><span>id: 139 - size: 77</span></p><p style="--h:45"><span>id: 351 - size: 45</span></p><p style="--h:28"><span>id: 458 - size: 28</span></p></div></div></div>
<div class="c"><b>177</b><div class="a"><i>150</i><i>100</i><i>50</i><i>0</i><div class="s"><p style="--h:66"><span>id: 215 - size: 66</span></p><p style="--h:53"><span>id: 299 - size: 53</span></p><p style="--h:31"><span>id: 439 - size: 31</span></p></div></div></div>
<div class="c"><b>178</b><div class="a"><i>150</i><i>100</i><i>50</i><i>0</i><div class="s"><p style="--h:46"><span>id: 347 - size: 46</span></p><p style="--h:44"><span>id: 362 - size: 44</span></p><p style="--h:32"><span>id: 432 - size: 32</span></p><p style="--h:28"><span>id: 461 - size: 28</span></p></div></div></div>
<div class="c"><b>179</b><div class="a"><i>150</i><i>100</i><i>50</i><i>0</i><div class="s"><p style="--h:68"><span>id: 197 - size: 68</span></p><p style="--h:48"><span>id: 332 - size: 48</span></p><p style="--h:34"><span>id: 416 - size: 34</span></p></div></div></div>
<div class="c"><b>180</b><div class="a"><i>150</i><i>100</i><i>50</i><i>0</i><div class="s"><p style="--h:88"><span>id: 62 - size: 88</span></p><p style="--h:36"><span>id: 405 - size: 36</span></p><p style="--h:26"><span>id: 469 - size: 26</span></p></div></div></div>
<div class="c"><b>181</b><div class="a"><i>150</i><i>100</i><i>50</i><i>0</i><div class="s"><p style="--h:65"><span>id: 221 - size: 65</span></p><p style="--h:48"><span>id: 333 - size: 48</span></p><p style="--h:35"><span>id: 411 - size: 35</span></p></div></div></div>
<div class="c"><b>182</b><div class="a"><i>150</i><i>100</i><i>50</i><i>0</i><div class="s"><p style="--h:66"><span>id: 211 - size: 66</span></p><p style="--h:55"><span>id: 284 - size: 55</span></p><p style="--h:29"><span>id: 455 - size: 29</span></p></div></div></div>
<div class="c"><b>183</b><div class="a"><i>150</i><i>100</i><i>50</i><i>0</i><div class="s"><p style="--h:87"><span>id: 81 - size: 87</span></p><p style="--h:39"><span>id: 388 - size: 39</span></p><p style="--h:24"><span>id: 478 - size: 24</span></p></div></div></div>
<div class="c"><b>184</b><div class="a"><i>150</i><i>100</i><i>50</i><i>0</i><div class="s"><p style="--h:74"><span>id: 157 - size: 74</span></p><p style="--h:74"><span>id: 163 - size: 74</span></p></div></div></div>
<div class="c"><b>185</b><div class="a"><i>150</i><i>100</i><i>50</i><i>0</i><div class="s"><p style="--h:99"><span>id: 10 - size: 99</span></p><p style="--h:51"><span>id: 315 - size: 51</span></p></div></div></div>
<div class="c"><b>186</b><div class="a"><i>150</i><i>100</i><i>50</i><i>0</i><div class="s"><p style="--h:100"><span>id: 4 - size: 100</span></p><p style="--h:49"><span>id: 328 - size: 49</span></p></div></div></div>
<div class="c"><b>187</b><div class="a"><i>150</i><i>100</i><i>50</i><i>0</i><div class="s"><p style="--h:77"><span>id: 138 - size: 77</span></p><p style="--h:65"><span>id: 217 - size: 65</span></p></div></div></div>
<div class="c"><b>188</b><div class="a"><i>150</i><i>100</i><i>50</i><i>0</i><div class="s"><p style="--h:69"><span>id: 190 - size: 69</span></p><p style="--h:44"><span>id: 358 - size: 44</span></p><p style="--h:37"><span>id: 395 - size: 37</span></p></div></div></div>
<div class="c"><b>189</b><div class="a"><i>150</i><i>100</i><i>50</i><i>0</i><div class="s"><p style="--h:89"><span>id: 57 - size: 89</span></p><p style="--h:61"><span>id: 253 - size: 61</span></p></div></div></div>
<div class="c"><b>190</b><div class="a"><i>150</i><i>100</i><i>50</i><i>0</i><div class="s"><p style="--h:76"><span>id: 142 - size: 76</span></p><p style="--h:74"><span>id: 159 - size: 74</span></p></div></div></div>
<div class="c"><b>191</b><div class="a"><i>150</i><i>100</i><i>50</i><i>0</i><div class="s"><p style="--h:88"><span>id: 65 - size: 88</span></p><p style="--h:42"><span>id: 380 - size: 42</span></p></div></div></div>
<div class="c"><b>192</b><div class="a"><i>150</i><i>100</i><i>50</i><i>0</i><div class="s"><p style="--h:78"><span>id: 130 - size: 78</span></p><p style="--h:45"><span>id: 353 - size: 45</span></p><p style="--h:27"><span>id: 463 - size: 27</span></p></div></div></div>
<div class="c"><b>193</b><div class="a"><i>150</i><i>100</i><i>50</i><i>0</i><div class="s"><p style="--h:70"><span>id: 184 - size: 70</span></p><p style="--h:50"><span>id: 320 - size: 50</span></p><p style="--h:30"><span>id: 445 - size: 30</span></p></div></div></div>
<div class="c"><b>194</b><div class="a"><i>150</i><i>100</i><i>50</i><i>0</i><div class="s"><p style="--h:82"><span>id: 108 - size: 82</span></p><p style="--h:40"><span>id: 383 - size: 40</span></p><p style="--h:28"><span>id: 462 - size: 28</span></p></div></div></div>
<div class="c"><b>195</b><div class="a"><i>150</i><i>100</i><i>50</i><i>0</i><div class="s"><p style="--h:76"><span>id: 144 - size: 76</span></p><p style="--h:42"><span>id: 372 - size: 42</span></p><p style="--h:32"><span>id: 433 - size: 32</span></p></div></div></div>
<div class="c"><b>196</b><div class="a"><i>150</i><i>100</i><i>50</i><i>0</i><div class="s"><p style="--h:93"><span>id: 33 - size: 93</span></p><p style="--h:36"><span>id: 404 - size: 36</span></p><p style="--h:21"><span>id: 491 - size: 21</span></p></div></div></div>
<div class="c"><b>197</b><div class="a"><i>150</i><i>100</i><i>50</i><i>0</i><div class="s"><p style="--h:77"><span>id: 137 - size: 77</span></p><p style="--h:73"><span>id: 167 - size: 73</span></p></div></div></div>
<div class="c"><b>198</b><div class="a"><i>150</i><i>100</i><i>50</i><i>0</i><div class="s"><p style="--h:89"><span>id: 60 - size: 89</span></p><p style="--h:61"><span>id: 252 - size: 61</span></p></div></div></div>
<div class="c"><b>199</b><div class="a"><i>150</i><i>100</i><i>50</i><i>0</i><div class="s"><p style="--h:91"><span>id: 39 - size: 91</span></p><p style="--h:59"><span>id: 259 - size: 59</span></p></div></div></div>
<div class="c"><b>200</b><div class="a"><i>150</i><i>100</i><i>50</i><i>0</i><div class="s"><p style="--h:93"><span>id: 29 - size: 93</span></p><p style="--h:56"><span>id: 274 - size: 56</span></p></div></div></div>
<div class="c"><b>201</b><div class="a"><i>150</i><i>100</i><i>50</i><i>0</i><div class="s"><p style="--h:77"><span>id: 134 - size: 77</span></p><p style="--h:65"><span>id: 219 - size: 65</span></p></div></div></div>
<div class="c"><b>202</b><div class="a"><i>150</i><i>100</i><i>50</i><i>0</i><div class="s"><p style="--h:89"><span>id: 54 - size: 89</span></p><p style="--h:61"><span>id: 249 - size: 61</span></p></div></div></div>
<div class="c"><b>203</b><div class="a"><i>150</i><i>100</i><i>50</i><i>0</i><div class="s"><p style="--h:88"><span>id: 74 - size: 88</span></p><p style="--h:62"><span>id: 244 - size: 62</span></p></div></div></div>
<div class="c"><b>204</b><div class="a"><i>150</i><i>100</i><i>50</i><i>0</i><div class="s"><p style="--h:80"><span>id: 116 - size: 80</span></p><p style="--h:70"><span>id: 185 - size: 70</span></p></div></div></div>
<div class="c"><b>205</b><div class="a"><i>150</i><i>100</i><i>50</i><i>0</i><div class="s"><p style="--h:72"><span>id: 170 - size: 72</span></p><p style="--h:45"><span>id: 355 - size: 45</span></p><p style="--h:33"><span>id: 426 - size: 33</span></p></div></div></div>
<div class="c"><b>206</b><div class="a"><i>150</i><i>100</i><i>50</i><i>0</i><div class="s"><p style="--h:85"><span>id: 88 - size: 85</span></p><p style="--h:65"><span>id: 224 - size: 65</span></p></div></div></div>
<div class="c"><b>207</b><div class="a"><i>150</i><i>100</i><i>50</i><i>0</i><div class="s"><p style="--h:88"><span>id: 69 - size: 88</span></p><p style="--h:62"><span>id: 243 - size: 62</span></p></div></div></div>
<div class="c"><b>208</b><div class="a"><i>150</i><i>100</i><i>50</i><i>0</i><div class="s"><p style="--h:85"><span>id: 94 - size: 85</span></p><p style="--h:65"><span>id: 223 - size: 65</span></p></div></div></div>
<div class="c"><b>209</b><div class="a"><i>150</i><i>100</i><i>50</i><i>0</i><div class="s"><p style="--h:87"><span>id: 83 - size: 87</span></p><p style="--h:63"><span>id: 232 - size: 63</span></p></div></div></div>
<div class="c"><b>210</b><div class="a"><i>150</i><i>100</i><i>50</i><i>0</i><div class="s"><p style="--h:78"><span>id: 132 - size: 78</span></p><p style="--h:72"><span>id: 168 - size: 72</span></p></div></div></div>
<div class="c"><b>211</b><div class="a"><i>150</i><i>100</i><i>50</i><i>0</i><div class="s"><p style="--h:87"><span>id: 82 - size: 87</span></p><p style="--h:63"><span>id: 240 - size: 63</span></p></div></div></div>
<div class="c"><b>212</b><div class="a"><i>150</i><i>100</i><i>50</i><i>0</i><div class="s"><p style="--h:81"><span>id: 112 - size: 81</span></p><p style="--h:69"><span>id: 192 - size: 69</span></p></div></div></div>
</div></foreignObject></svg></body></html>
